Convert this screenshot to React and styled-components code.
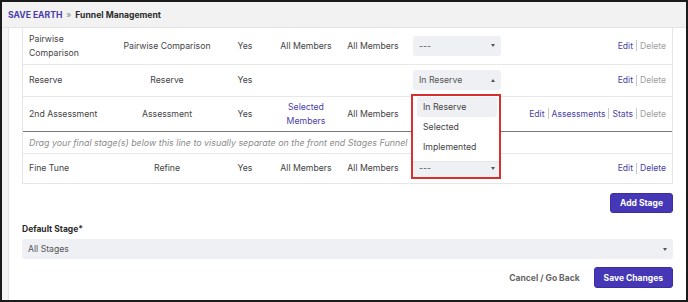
import React from "react";
import styled, { createGlobalStyle } from "styled-components";

const GlobalStyle = createGlobalStyle`
  * { box-sizing: border-box; }
  body {
    margin: 0;
    font-family: Inter, "Noto Sans", "Liberation Sans", sans-serif;
    background: #fff;
  }
`;

const Frame = styled.div`
  width: 688px;
  height: 302px;
  border: 2px solid #1b1b1b;
  display: flex;
  flex-direction: column;
  overflow: hidden;
  background: #fff;
`;

const Header = styled.div`
  height: 26px;
  flex-shrink: 0;
  display: flex;
  align-items: center;
  gap: 4px;
  padding-left: 6px;
  background: #f2f2f3;
  border-bottom: 1px solid #e2e2e2;
  font-size: 8.6px;
  font-weight: 700;
`;

const Brand = styled.span`
  color: #483ca8;
`;

const Crumb = styled.span`
  color: #8a8a8a;
  font-weight: 400;
`;

const Title = styled.span`
  color: #2b2b2b;
`;

const Body = styled.div`
  flex: 1;
  display: flex;
`;

const Gutter = styled.div`
  width: 7px;
  background: #f4f4f4;
  border-right: 1px solid #e4e4e4;
`;

const Main = styled.div`
  flex: 1;
  padding: 0 13px 0 13px;
  display: flex;
  flex-direction: column;
`;

const TableWrap = styled.div`
  position: relative;
  border: 1px solid #e6e6e6;
  border-top: none;
`;

const Table = styled.table`
  width: 100%;
  border-collapse: collapse;
  table-layout: fixed;
  font-size: 8.7px;
  color: #444;
`;

const Row = styled.tr`
  height: ${(p) => p.$h}px;
  border-bottom: 1px solid ${(p) => (p.$dark ? "#7a7a7a" : "#e8e8e8")};
  &:last-child {
    border-bottom: none;
  }
`;

const Cell = styled.td`
  padding: 0 ${(p) => (p.$align === "center" || !p.$align ? 2 : 6)}px;
  text-align: ${(p) => p.$align || "center"};
  line-height: 14px;
  vertical-align: middle;
  white-space: nowrap;
  color: ${(p) => (p.$link ? "#4a3fa6" : "#444")};
`;

const NoteCell = styled.td`
  padding: 0 6px;
  font-style: italic;
  color: #8b8b8b;
  font-size: 8.9px;
  white-space: nowrap;
`;

const Select = styled.div`
  height: 20px;
  width: 88px;
  margin-left: -2px;
  background: #eef0f3;
  border-radius: 3px;
  display: flex;
  align-items: center;
  justify-content: space-between;
  padding: 0 6px;
  color: #555;
  text-align: left;
`;

const Caret = styled.span`
  width: 0;
  height: 0;
  border-left: 2.5px solid transparent;
  border-right: 2.5px solid transparent;
  ${(p) =>
    p.$up
      ? "border-bottom: 3px solid #555;"
      : "border-top: 3px solid #555;"}
`;

const Actions = styled.div`
  display: flex;
  justify-content: flex-end;
  align-items: center;
  gap: 3px;
  font-size: 8.6px;
`;

const Action = styled.span`
  color: ${(p) => (p.$muted ? "#a0a0a0" : "#4a3fa6")};
`;

const Sep = styled.span`
  width: 1px;
  height: 11px;
  background: #c8c8c8;
`;

const Menu = styled.div`
  position: absolute;
  left: 390px;
  top: 68px;
  width: 88px;
  height: 66px;
  background: #fff;
  border-bottom: 1px solid #e6e6e6;
  padding: 1px 4px;
  font-size: 8.7px;
  color: #444;
`;

const Option = styled.div`
  height: 20px;
  display: flex;
  align-items: center;
  padding-left: 6px;
  border-radius: 2px;
  background: ${(p) => (p.$active ? "#eff0f3" : "transparent")};
`;

const Annotation = styled.div`
  position: absolute;
  left: 388px;
  top: 66px;
  width: 90px;
  height: 85px;
  border: 2px solid #d4312f;
  pointer-events: none;
`;

const ButtonRow = styled.div`
  display: flex;
  justify-content: flex-end;
  align-items: center;
  gap: 14px;
  margin-top: ${(p) => p.$mt}px;
`;

const Button = styled.button`
  height: ${(p) => p.$h || 20}px;
  padding: 0 ${(p) => p.$px || 10}px;
  background: #4537b5;
  color: #fff;
  border: 1px solid #3a2ea0;
  border-radius: 3px;
  font-family: inherit;
  font-size: 8.5px;
  font-weight: 700;
`;

const Cancel = styled.span`
  color: #666;
  font-size: 8.5px;
  font-weight: 700;
`;

const Label = styled.div`
  margin-top: 9px;
  font-size: 8.5px;
  font-weight: 700;
  color: #2b2b2b;
  height: 14px;
  line-height: 14px;
`;

const WideSelect = styled.div`
  margin-top: 3px;
  height: 20px;
  background: #eff0f3;
  border-radius: 3px;
  display: flex;
  align-items: center;
  justify-content: space-between;
  padding: 0 6px;
  font-size: 8.7px;
  color: #555;
`;

const rows = [
  { name: ["Pairwise", "Comparison"], type: "Pairwise Comparison", req: "Yes", who: "All Members", see: "All Members", sel: "---", h: 36, actions: ["Edit", "Delete"] },
  { name: ["Reserve"], type: "Reserve", req: "Yes", who: "", see: "", sel: "In Reserve", up: true, h: 32, actions: ["Edit", "Delete"] },
  { name: ["2nd Assessment"], type: "Assessment", req: "Yes", who: ["Selected", "Members"], see: "All Members", sel: null, h: 35, dark: true, actions: ["Edit", "Assessments", "Stats", "Delete"] },
];

const renderActions = (list, deleteActive) => (
  <Actions>
    {list.map((a, i) => (
      <React.Fragment key={a}>
        {i > 0 && <Sep />}
        <Action $muted={a === "Delete" && !deleteActive}>{a}</Action>
      </React.Fragment>
    ))}
  </Actions>
);

const StageRow = ({ row }) => (
  <Row $h={row.h} $dark={row.dark}>
    <Cell $align="left">
      {row.name.map((n) => (
        <div key={n}>{n}</div>
      ))}
    </Cell>
    <Cell>{row.type}</Cell>
    <Cell>{row.req}</Cell>
    <Cell $link={Array.isArray(row.who)}>
      {Array.isArray(row.who) ? row.who.map((w) => <div key={w}>{w}</div>) : row.who}
    </Cell>
    <Cell>{row.see}</Cell>
    <Cell $align="left">
      {row.sel && (
        <Select>
          <span>{row.sel}</span>
          <Caret $up={row.up} />
        </Select>
      )}
    </Cell>
    <Cell $align="right">{renderActions(row.actions, false)}</Cell>
  </Row>
);

export default function App() {
  return (
    <>
      <GlobalStyle />
      <Frame>
        <Header>
          <Brand>SAVE EARTH</Brand>
          <Crumb>»</Crumb>
          <Title>Funnel Management</Title>
        </Header>
        <Body>
          <Gutter />
          <Main>
            <TableWrap>
              <Table>
                <colgroup>
                  <col style={{ width: 96 }} />
                  <col style={{ width: 96 }} />
                  <col style={{ width: 60 }} />
                  <col style={{ width: 62 }} />
                  <col style={{ width: 72 }} />
                  <col style={{ width: 96 }} />
                  <col />
                </colgroup>
                <tbody>
                  {rows.map((r) => (
                    <StageRow key={r.type} row={r} />
                  ))}
                  <Row $h={22}>
                    <NoteCell colSpan={7}>
                      Drag your final stage(s) below this line to visually separate on the front end Stages Funnel
                    </NoteCell>
                  </Row>
                  <Row $h={30}>
                    <Cell $align="left">Fine Tune</Cell>
                    <Cell>Refine</Cell>
                    <Cell>Yes</Cell>
                    <Cell>All Members</Cell>
                    <Cell>All Members</Cell>
                    <Cell $align="left">
                      <Select>
                        <span>---</span>
                        <Caret />
                      </Select>
                    </Cell>
                    <Cell $align="right">{renderActions(["Edit", "Delete"], true)}</Cell>
                  </Row>
                </tbody>
              </Table>
              <Menu>
                <Option $active>In Reserve</Option>
                <Option>Selected</Option>
                <Option>Implemented</Option>
              </Menu>
              <Annotation />
            </TableWrap>
            <ButtonRow $mt={9}>
              <Button $px={9}>Add Stage</Button>
            </ButtonRow>
            <Label>Default Stage*</Label>
            <WideSelect>
              <span>All Stages</span>
              <Caret />
            </WideSelect>
            <ButtonRow $mt={8}>
              <Cancel>Cancel / Go Back</Cancel>
              <Button $h={21} $px={9}>Save Changes</Button>
            </ButtonRow>
          </Main>
        </Body>
      </Frame>
    </>
  );
}
